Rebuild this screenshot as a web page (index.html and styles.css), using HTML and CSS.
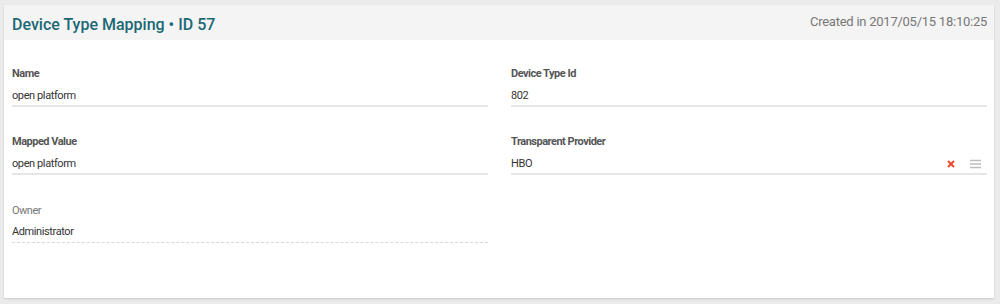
FILE: index.html
```html
<!DOCTYPE html>
<html lang="en">
<head>
    <meta charset="UTF-8">
    <title>Device Type Mapping</title>
    <link rel="stylesheet" href="styles.css">
</head>
<body>
    <div class="card">
        <div class="card-header">
            <h2 class="title">Device Type Mapping &bull; ID 57</h2>
            <span class="created">Created in 2017/05/15 18:10:25</span>
        </div>
        <div class="card-body">
            <div class="field">
                <label>Name</label>
                <div class="value">open platform</div>
            </div>
            <div class="field">
                <label>Device Type Id</label>
                <div class="value">802</div>
            </div>
            <div class="field">
                <label>Mapped Value</label>
                <div class="value">open platform</div>
            </div>
            <div class="field">
                <label>Transparent Provider</label>
                <div class="value select">
                    <span>HBO</span>
                    <span class="actions">
                        <svg class="clear" width="8" height="8" viewBox="0 0 8 8"><path d="M1 1L7 7M7 1L1 7" stroke="#ef4a2c" stroke-width="2"/></svg>
                        <svg class="menu" width="11" height="10" viewBox="0 0 11 10"><path d="M0 1.5H11M0 5H11M0 8.5H11" stroke="#bdbdbd" stroke-width="1.5"/></svg>
                    </span>
                </div>
            </div>
            <div class="field readonly">
                <label>Owner</label>
                <div class="value">Administrator</div>
            </div>
        </div>
    </div>
</body>
</html>
```

FILE: styles.css
```css
body {
    margin: 0;
    background-color: #ebebeb;
    font-family: Roboto, "Liberation Sans", sans-serif;
    padding: 5px 6px 6px 4px;
}
.card {
    background: white;
    box-shadow: 0 1px 2px rgba(0, 0, 0, 0.15);
    height: 293px;
}
.card-header {
    background-color: #f4f4f4;
    height: 35px;
    display: flex;
    align-items: center;
    justify-content: space-between;
    padding: 0 7px 0 8px;
}
.title {
    margin: 4px 0 0;
    font-size: 16px;
    font-weight: 500;
    color: #1b6875;
}
.created {
    font-size: 13px;
    letter-spacing: -0.25px;
    color: #777;
    margin-top: -2px;
}
.card-body {
    display: grid;
    grid-template-columns: 1fr 1fr;
    column-gap: 23px;
    row-gap: 28px;
    padding: 27px 7px 0 8px;
}
.field label {
    display: block;
    font-size: 11px;
    font-weight: bold;
    letter-spacing: -0.5px;
    line-height: 14px;
    color: #555;
    margin-bottom: 8px;
}
.field .value {
    font-size: 11px;
    letter-spacing: -0.4px;
    line-height: 14px;
    color: #333;
    padding-bottom: 2px;
    border-bottom: 2px solid #e6e6e6;
}
.select {
    display: flex;
    justify-content: space-between;
    align-items: center;
}
.actions {
    display: flex;
    align-items: center;
    gap: 15px;
    padding-right: 6px;
}
.readonly {
    margin-top: 1px;
}
.readonly label {
    font-weight: normal;
    color: #777;
    margin-bottom: 7px;
}
.readonly .value {
    border-bottom: 1px dashed #d8d8d8;
    padding-bottom: 3px;
}
```
